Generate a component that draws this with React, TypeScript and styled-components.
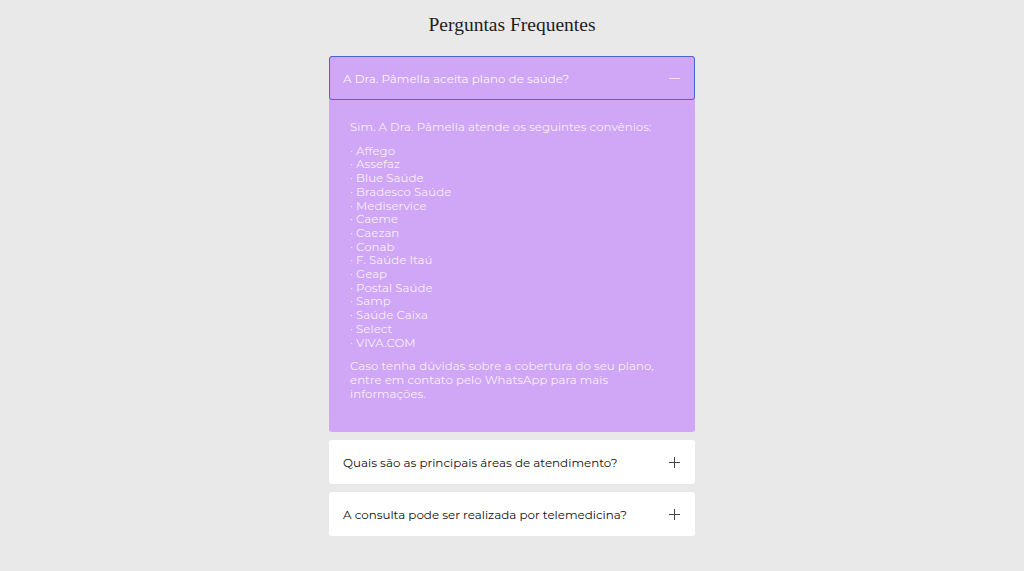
import styled, { createGlobalStyle } from "styled-components";

const GlobalStyle = createGlobalStyle`
  html, body {
    margin: 0;
    background: #e9e9e9;
  }
`;

interface Faq {
  question: string;
  open?: boolean;
}

const Page = styled.main`
  display: flex;
  flex-direction: column;
  align-items: center;
  padding-top: 13px;
  min-height: 571px;
  box-sizing: border-box;
`;

const Title = styled.h1`
  margin: 0 0 19px;
  font-family: "Liberation Serif", "DejaVu Serif", serif;
  font-weight: 400;
  font-size: 19.5px;
  color: #1d1d1d;
  line-height: 24px;
`;

const List = styled.div`
  width: 366px;
  display: flex;
  flex-direction: column;
  gap: 8px;
`;

const Item = styled.section<{ open?: boolean }>`
  background: ${(p) => (p.open ? "#d0a6f6" : "#ffffff")};
  border-radius: 3px;
`;

const Header = styled.button<{ open?: boolean }>`
  width: 100%;
  height: 44px;
  display: flex;
  align-items: center;
  justify-content: space-between;
  padding: 0 13px;
  box-sizing: border-box;
  background: transparent;
  border: 1px solid ${(p) => (p.open ? "#4b66c9" : "transparent")};
  border-radius: 3px;
  font-family: "Montserrat", "Open Sans", sans-serif;
  font-size: 11.9px;
  color: ${(p) => (p.open ? "rgba(255,255,255,0.92)" : "#111111")};
  text-align: left;
  cursor: pointer;
`;

const Body = styled.div`
  padding: 21px 21px 31px;
  font-family: "Montserrat", "Open Sans", sans-serif;
  font-size: 11.8px;
  line-height: 13.7px;
  color: rgba(255, 255, 255, 0.85);
`;

const Para = styled.p`
  margin: 0 0 10px;
  &:last-child {
    margin: 10px 0 0;
  }
`;

const Plans = styled.ul`
  list-style: none;
  margin: 0;
  padding: 0;
  li::before {
    content: "· ";
  }
`;

const Toggle = ({ open }: { open?: boolean }) => (
  <svg width="13" height="13" viewBox="0 0 13 13" fill="none">
    <path d="M1 6.5h11" stroke={open ? "rgba(255,255,255,0.65)" : "#444"} strokeWidth="1" />
    {!open && <path d="M6.5 1v11" stroke="#444" strokeWidth="1" />}
  </svg>
);

const plans = [
  "Affego",
  "Assefaz",
  "Blue Saúde",
  "Bradesco Saúde",
  "Mediservice",
  "Caeme",
  "Caezan",
  "Conab",
  "F. Saúde Itaú",
  "Geap",
  "Postal Saúde",
  "Samp",
  "Saúde Caixa",
  "Select",
  "VIVA.COM",
];

const faqs: Faq[] = [
  { question: "A Dra. Pâmella aceita plano de saúde?", open: true },
  { question: "Quais são as principais áreas de atendimento?" },
  { question: "A consulta pode ser realizada por telemedicina?" },
];

const App = () => {
  return (
    <>
      <GlobalStyle />
      <Page>
        <Title>Perguntas Frequentes</Title>
        <List>
          {faqs.map((f) => (
            <Item key={f.question} open={f.open}>
              <Header open={f.open}>
                <span>{f.question}</span>
                <Toggle open={f.open} />
              </Header>
              {f.open && (
                <Body>
                  <Para>Sim. A Dra. Pâmella atende os seguintes convênios:</Para>
                  <Plans>
                    {plans.map((p) => (
                      <li key={p}>{p}</li>
                    ))}
                  </Plans>
                  <Para>
                    Caso tenha dúvidas sobre a cobertura do seu plano, entre em contato pelo
                    WhatsApp para mais informações.
                  </Para>
                </Body>
              )}
            </Item>
          ))}
        </List>
      </Page>
    </>
  );
};

export default App;
